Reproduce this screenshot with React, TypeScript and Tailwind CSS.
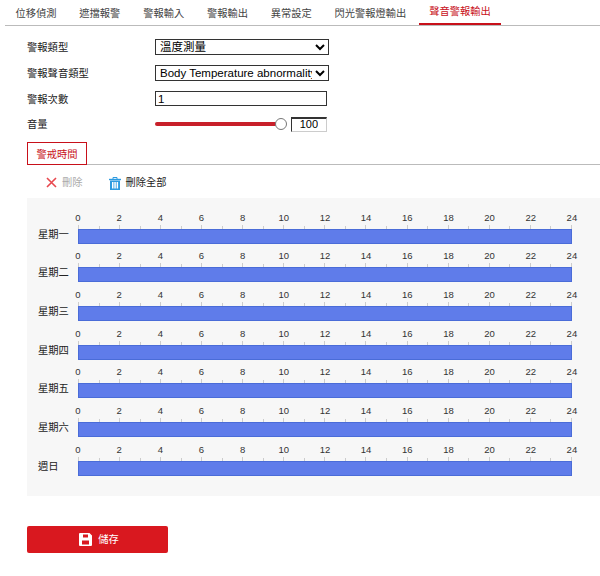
const font = "[font-family:'Liberation_Sans','Noto_Sans_CJK_TC',sans-serif]";

const tabs = ["位移偵測", "遮擋報警", "警報輸入", "警報輸出", "異常設定", "閃光警報燈輸出", "聲音警報輸出"];
const days = ["星期一", "星期二", "星期三", "星期四", "星期五", "星期六", "週日"];
const hours = [0, 2, 4, 6, 8, 10, 12, 14, 16, 18, 20, 22, 24];
const ticks = Array.from({ length: 25 }, (_, i) => i);

function DayRow({ day }: { day: string }) {
  return (
    <div className="flex h-[38.7px] items-end">
      <div className="w-[51px] pb-[1px] pl-[11px] text-[10.3px] leading-[16px] text-[#222]">{day}</div>
      <div className="w-[494px]">
        <div className="flex h-[12px] justify-between text-[9.5px] leading-[10px] text-[#333]">
          {hours.map((h) => (
            <div key={h} className="flex w-0 justify-center">
              <span>{h}</span>
            </div>
          ))}
        </div>
        <div className="flex h-[4px] justify-between">
          {ticks.map((t) => (
            <div key={t} className={`w-px bg-[#ccc] ${t % 2 === 0 ? "h-[4px]" : "mt-[1px] h-[3px]"}`} />
          ))}
        </div>
        <div className="h-[15px] border border-[#4a6cd8] bg-[#5f7cea]" />
      </div>
    </div>
  );
}

export default function App() {
  return (
    <div className={`h-[576px] w-[600px] overflow-hidden bg-white ${font}`}>
      {/* tabs */}
      <div className="ml-[5px] flex h-[26px] border-b border-[#bbb] pl-[0.5px]">
        {tabs.map((t, i) => (
          <div
            key={t}
            className={`mr-[2.8px] h-[25px] px-[10px] text-[10.25px] ${
              i === 6 ? "border-b-2 border-[#c8101a] leading-[24px] text-[#c8101a]" : "leading-[28px] text-[#444]"
            }`}
          >
            {t}
          </div>
        ))}
      </div>

      {/* form */}
      <div className="mt-[13px] ml-[27px] grid grid-cols-[128px_174px] items-center gap-y-[10px] text-[10.3px] text-[#222]">
        <span className="translate-y-[1px]">警報類型</span>
        <select className="h-[16px] w-[174px] border border-[#333] bg-white pl-0 text-[11.5px] leading-[14px] text-black outline-none">
          <option>溫度測量</option>
        </select>
        <span className="translate-y-[1px]">警報聲音類型</span>
        <select className="h-[16px] w-[174px] border border-[#333] bg-white pl-0 text-[11.5px] leading-[14px] text-black outline-none">
          <option>Body Temperature abnormality</option>
        </select>
        <span className="translate-y-[1px]">警報次數</span>
        <input
          readOnly
          value="1"
          className="h-[15px] w-[172px] border border-[#333] bg-white pl-[2px] text-[11.5px] leading-[13px] text-black outline-none"
        />
        <span className="translate-y-[1px]">音量</span>
        <div className="flex h-[15px] items-center">
          <div className="h-[4px] w-[122px] rounded-full bg-[#c8202a]" />
          <div className="h-[12px] w-[12px] -translate-x-[2px] rounded-full border border-[#777] bg-white" />
          <input
            readOnly
            value="100"
            className="ml-[2px] h-[15px] w-[36px] border border-t-2 border-[#ccc] border-t-[#333] border-l-[#333] bg-white pr-[8px] text-right text-[11px] text-black outline-none"
          />
        </div>
      </div>

      {/* schedule tab */}
      <div className="mt-[10px] ml-[27px] flex h-[23px] border-b border-[#bbb]">
        <div className="h-[23px] w-[60px] border border-[#c8101a] text-center text-[10.25px] leading-[23px] text-[#c8101a]">
          警戒時間
        </div>
      </div>

      {/* actions */}
      <div className="ml-[46px] flex h-[33px] items-center pt-[3px] text-[10.25px]">
        <svg width="11" height="11" viewBox="0 0 11 11">
          <path d="M1 1 L10 10 M10 1 L1 10" stroke="#e8484e" strokeWidth="1.6" fill="none" />
        </svg>
        <span className="ml-[5px] text-[#aaa]">刪除</span>
        <svg width="12" height="13" viewBox="0 0 12 13" className="mt-[2px] ml-[26px]">
          <path d="M0 2.5 H12" stroke="#2d9be0" strokeWidth="1.4" fill="none" />
          <path d="M4 2 V0.5 H8 V2" stroke="#2d9be0" strokeWidth="1" fill="none" />
          <path d="M1 3.5 H11 V13 H1 Z M3 5 V11.5 H4.5 V5 Z M5.3 5 V11.5 H6.8 V5 Z M7.6 5 V11.5 H9.1 V5 Z" fill="#2d9be0" fillRule="evenodd" />
        </svg>
        <span className="ml-[5px] text-[#222]">刪除全部</span>
      </div>

      {/* timeline */}
      <div className="ml-[27px] h-[298px] bg-[#f7f7f7] pt-[7px]">
        {days.map((d) => (
          <DayRow key={d} day={d} />
        ))}
      </div>

      {/* save */}
      <button className="mt-[30px] ml-[27px] flex h-[27px] w-[141px] items-center justify-center gap-[6px] rounded-[2px] bg-[#d9181f] pl-[3px] text-[10.25px] text-white">
        <svg width="13" height="13" viewBox="0 0 13 13">
          <path
            d="M1 0 H10.5 L13 2.5 V12 Q13 13 12 13 H1 Q0 13 0 12 V1 Q0 0 1 0 Z M4 1.5 V4.5 H9 V1.5 Z M3 7.5 V11.5 H10 V7.5 Z"
            fill="#fff"
            fillRule="evenodd"
          />
        </svg>
        <span>儲存</span>
      </button>
    </div>
  );
}
